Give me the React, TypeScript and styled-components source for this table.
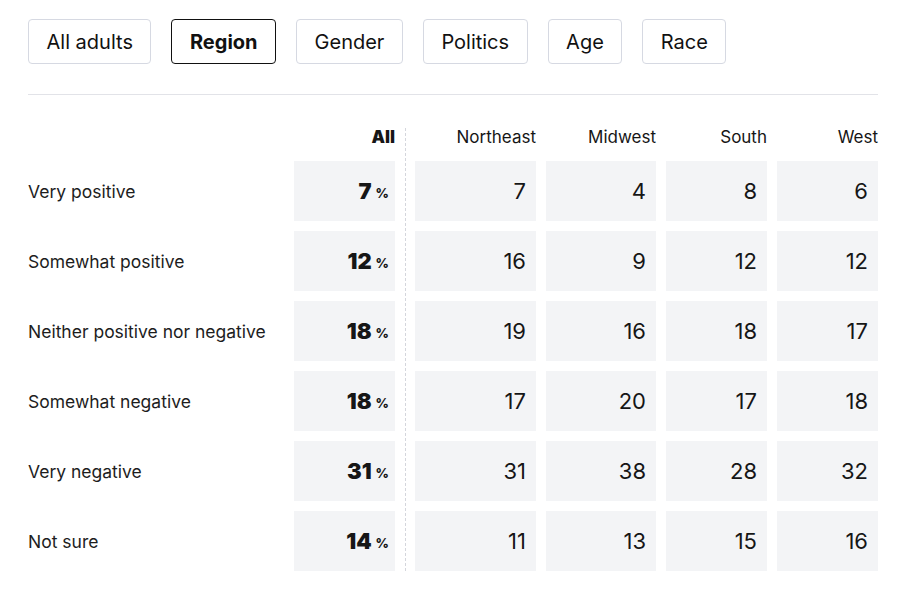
import styled, { createGlobalStyle } from "styled-components";

const GlobalStyle = createGlobalStyle`
  body {
    margin: 0;
    background: #ffffff;
    font-family: Inter, "Liberation Sans", sans-serif;
    color: #1b1b1b;
  }
`;

const Page = styled.div`
  padding: 19px 30px 0 28px;
  width: 850px;
`;

const TabBar = styled.div`
  display: flex;
  gap: 20px;
  padding-bottom: 30px;
  border-bottom: 1px solid #e2e3e8;
`;

const Tab = styled.button<{ $active?: boolean }>`
  height: 45px;
  padding: 0 17.5px;
  background: #ffffff;
  border: 1px solid ${(p) => (p.$active ? "#111111" : "#d6d9e2")};
  border-radius: 4px;
  font-family: inherit;
  font-size: 20px;
  font-weight: ${(p) => (p.$active ? 700 : 400)};
  color: #111111;
  cursor: pointer;
`;

const Table = styled.div`
  display: grid;
  grid-template-columns: 256px 101px 0px 121px 110px 101px 101px;
  grid-template-rows: 23px;
  grid-auto-rows: 60px;
  column-gap: 10px;
  row-gap: 10px;
  margin-top: 33px;
`;

const Separator = styled.div`
  grid-column: 3;
  grid-row: 1 / span 7;
  width: 0;
  border-left: 1px dashed #d4d6dc;
`;

const HeadCell = styled.div<{ $bold?: boolean }>`
  text-align: right;
  font-size: 17px;
  line-height: 17px;
  padding-top: 1px;
  font-weight: ${(p) => (p.$bold ? 900 : 400)};
  color: #161616;
`;

const RowLabel = styled.div`
  display: flex;
  align-items: center;
  font-size: 17.5px;
  color: #1d1d1d;
`;

const ValueCell = styled.div<{ $bold?: boolean }>`
  display: flex;
  align-items: center;
  justify-content: flex-end;
  padding-right: ${(p) => (p.$bold ? "6px" : "10px")};
  background: #f3f4f6;
  font-size: 22px;
  font-weight: ${(p) => (p.$bold ? 900 : 400)};
  color: #161616;
`;

const Percent = styled.span`
  font-size: 13px;
  font-weight: 800;
  margin-left: 4px;
  align-self: center;
  padding-top: 3px;
`;

const tabs = ["All adults", "Region", "Gender", "Politics", "Age", "Race"];
const regions = ["Northeast", "Midwest", "South", "West"];

const rows = [
  { label: "Very positive", all: 7, values: [7, 4, 8, 6] },
  { label: "Somewhat positive", all: 12, values: [16, 9, 12, 12] },
  { label: "Neither positive nor negative", all: 18, values: [19, 16, 18, 17] },
  { label: "Somewhat negative", all: 18, values: [17, 20, 17, 18] },
  { label: "Very negative", all: 31, values: [31, 38, 28, 32] },
  { label: "Not sure", all: 14, values: [11, 13, 15, 16] },
];

export default function App() {
  return (
    <>
      <GlobalStyle />
      <Page>
        <TabBar>
          {tabs.map((t) => (
            <Tab key={t} $active={t === "Region"}>
              {t}
            </Tab>
          ))}
        </TabBar>
        <Table>
          <div />
          <HeadCell $bold>All</HeadCell>
          <Separator />
          {regions.map((r) => (
            <HeadCell key={r}>{r}</HeadCell>
          ))}
          {rows.map((row) => (
            <>
              <RowLabel key={row.label}>{row.label}</RowLabel>
              <ValueCell $bold>
                {row.all}
                <Percent>%</Percent>
              </ValueCell>
              {row.values.map((v, i) => (
                <ValueCell key={i}>{v}</ValueCell>
              ))}
            </>
          ))}
        </Table>
      </Page>
    </>
  );
}
